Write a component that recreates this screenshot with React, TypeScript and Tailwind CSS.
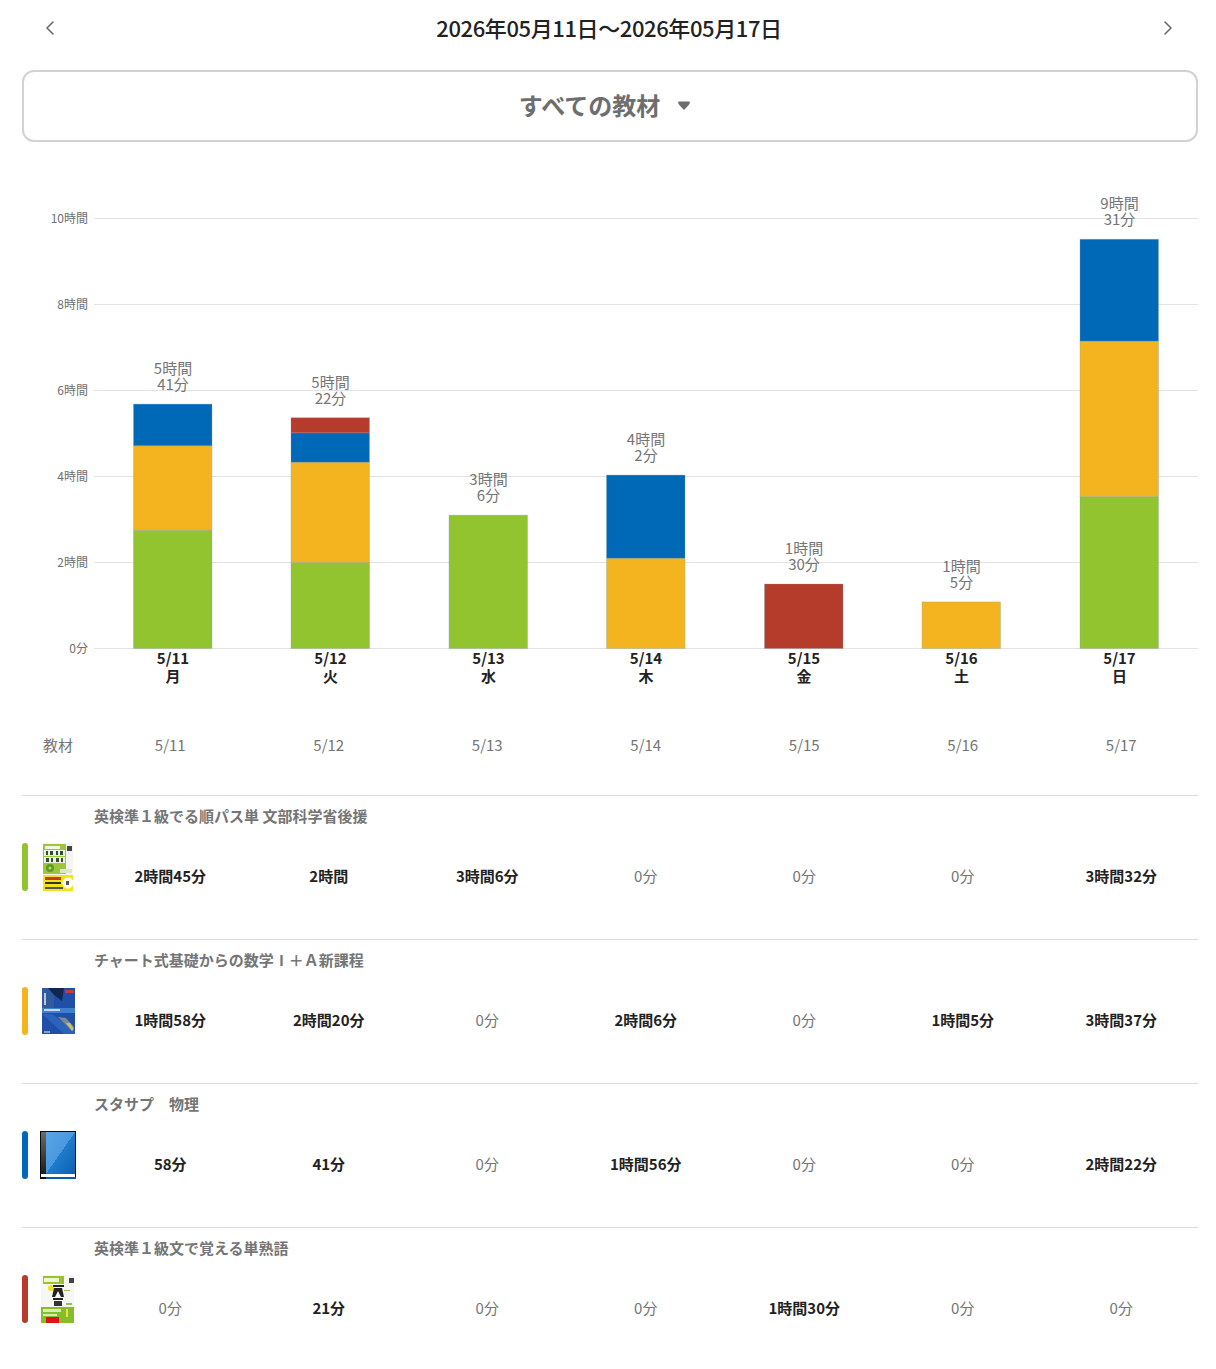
import { ChevronLeft, ChevronRight } from "lucide-react"
import type { ReactNode } from "react"

const GREEN = "#91c42e"
const ORANGE = "#f4b41f"
const BLUE = "#0069b7"
const RED = "#b53b2a"

const PX_PER_MIN = 43 / 60
const BASE_Y = 648

const days = [
  { date: "5/11", week: "月", cx: 173, total: ["5時間", "41分"], labelY: 373.5 },
  { date: "5/12", week: "火", cx: 330.5, total: ["5時間", "22分"], labelY: 387.5 },
  { date: "5/13", week: "水", cx: 488.5, total: ["3時間", "6分"], labelY: 484.5 },
  { date: "5/14", week: "木", cx: 646, total: ["4時間", "2分"], labelY: 444.5 },
  { date: "5/15", week: "金", cx: 804, total: ["1時間", "30分"], labelY: 553.5 },
  { date: "5/16", week: "土", cx: 961.5, total: ["1時間", "5分"], labelY: 571.5 },
  { date: "5/17", week: "日", cx: 1119.5, total: ["9時間", "31分"], labelY: 208.5 },
]

const books: { title: ReactNode; color: string; cover: string; mins: number[] }[] = [
  {
    title: "英検準１級でる順パス単 文部科学省後援",
    color: GREEN,
    cover: "pass",
    mins: [165, 120, 186, 0, 0, 0, 212],
  },
  {
    title: (
      <>
        チャート式基礎からの数学<span className="inline-block w-[15px] text-center">I</span>＋Ａ新課程
      </>
    ),
    color: ORANGE,
    cover: "chart",
    mins: [118, 140, 0, 126, 0, 65, 217],
  },
  {
    title: "スタサプ　物理",
    color: BLUE,
    cover: "plain",
    mins: [58, 41, 0, 116, 0, 0, 142],
  },
  {
    title: "英検準１級文で覚える単熟語",
    color: RED,
    cover: "tango",
    mins: [0, 21, 0, 0, 90, 0, 0],
  },
]

function formatMins(m: number) {
  if (m === 0) return "0分"
  const h = Math.floor(m / 60)
  const rest = m % 60
  if (h === 0) return `${rest}分`
  return rest === 0 ? `${h}時間` : `${h}時間${rest}分`
}

function Cover({ kind }: { kind: string }) {
  if (kind === "pass") {
    return (
      <svg width="36" height="48" viewBox="0 0 36 48">
        <rect x="3" y="0" width="30" height="48" fill="#f4f4f0" />
        <rect x="3" y="1" width="23" height="30" fill="#9cc63c" />
        <rect x="5" y="3" width="15" height="3" fill="#f6f6e0" />
        <rect x="4" y="7" width="21" height="6" fill="#eef2e6" />
        <rect x="4" y="14" width="21" height="6" fill="#eef2e6" />
        <rect x="6" y="8" width="2" height="4" fill="#33502a" />
        <rect x="10" y="8" width="3" height="4" fill="#33502a" />
        <rect x="16" y="8" width="2" height="4" fill="#33502a" />
        <rect x="20" y="8" width="3" height="4" fill="#33502a" />
        <rect x="6" y="15" width="3" height="4" fill="#33502a" />
        <rect x="11" y="15" width="2" height="4" fill="#33502a" />
        <rect x="16" y="15" width="3" height="4" fill="#33502a" />
        <rect x="21" y="15" width="2" height="4" fill="#33502a" />
        <circle cx="10" cy="25" r="4" fill="#5d9a24" />
        <circle cx="10" cy="25" r="1.5" fill="#b8d860" />
        <rect x="27" y="3" width="5" height="5" fill="#444" />
        <rect x="20" y="26" width="12" height="4" fill="#d8e8c8" />
        <rect x="3" y="32" width="30" height="16" fill="#f6e21a" />
        <rect x="5" y="34" width="16" height="3" fill="#c83a20" />
        <rect x="5" y="39" width="16" height="2" fill="#333" />
        <rect x="5" y="44" width="18" height="2" fill="#555" />
        <circle cx="28" cy="40" r="5.5" fill="#fdfdf0" />
        <rect x="26" y="38" width="3" height="4" fill="#555" />
      </svg>
    )
  }
  if (kind === "chart") {
    return (
      <svg width="36" height="48" viewBox="0 0 36 48">
        <rect x="2" y="1" width="33" height="46" fill="#1f4fa6" />
        <rect x="2" y="1" width="12" height="20" fill="#2f5a9c" />
        <polygon points="8,1 24,1 22,14 14,8" fill="#12274f" />
        <rect x="25" y="3" width="9" height="3" fill="#c83a3a" />
        <rect x="4" y="6" width="2" height="12" fill="#b9c6dc" />
        <rect x="2" y="21" width="33" height="5" fill="#3f7fd0" />
        <rect x="4" y="22" width="16" height="2" fill="#c8d8f0" />
        <polygon points="2,27 12,27 35,44 35,47 24,47" fill="#2a62bc" />
        <polygon points="18,30 26,31 34,40 32,44" fill="#7a8a90" />
        <polygon points="26,36 30,36 34,42 32,44" fill="#c8c070" />
        <rect x="4" y="44" width="6" height="2" fill="#8aa0c8" />
      </svg>
    )
  }
  if (kind === "tango") {
    return (
      <svg width="36" height="48" viewBox="0 0 36 48">
        <rect x="1" y="0" width="33" height="48" fill="#f6f6f2" />
        <rect x="3" y="1" width="21" height="8" fill="#94c52e" />
        <rect x="4" y="3" width="15" height="4" fill="#f4f4d0" />
        <rect x="29" y="3" width="5" height="5" fill="#444" />
        <circle cx="11" cy="13" r="3" fill="#f0e020" />
        <rect x="13" y="10" width="11" height="2" fill="#222" />
        <polygon points="14,13 22,13 24,22 21,22 18,16 15,22 12,22" fill="#222" />
        <rect x="13" y="23" width="10" height="2" fill="#222" />
        <rect x="14" y="26" width="8" height="5" fill="#333" />
        <rect x="24" y="15" width="6" height="1" fill="#9cc050" />
        <rect x="26" y="28" width="6" height="2" fill="#9cc050" />
        <rect x="1" y="32" width="33" height="16" fill="#85bd2b" />
        <rect x="3" y="34" width="18" height="3" fill="#dcebb0" />
        <rect x="3" y="39" width="14" height="2" fill="#dcebb0" />
        <rect x="26" y="34" width="2" height="8" fill="#f0e040" />
        <rect x="6" y="42" width="13" height="6" fill="#e01418" />
      </svg>
    )
  }
  return (
    <svg width="36" height="48" viewBox="0 0 36 48">
      <defs>
        <linearGradient id="plainBlue" x1="0" y1="0" x2="1" y2="1">
          <stop offset="0" stopColor="#5aa5e6" />
          <stop offset="0.5" stopColor="#4a98de" />
          <stop offset="0.5" stopColor="#1f7ccc" />
          <stop offset="1" stopColor="#0a62ae" />
        </linearGradient>
        <linearGradient id="plainSpine" x1="0" y1="0" x2="0" y2="1">
          <stop offset="0" stopColor="#6a6a6a" />
          <stop offset="1" stopColor="#1c1c1c" />
        </linearGradient>
      </defs>
      <rect x="0" y="0" width="36" height="48" fill="#0a0a0a" />
      <rect x="1" y="1" width="5" height="42" fill="url(#plainSpine)" />
      <rect x="6" y="1" width="29" height="42" fill="url(#plainBlue)" />
      <rect x="1" y="43" width="34" height="3" fill="#ffffff" />
      <rect x="6" y="46" width="30" height="2" fill="#0a5ca8" />
    </svg>
  )
}

function Chart() {
  const stacks = days.map((_, i) => books.map((b) => b.mins[i]))
  return (
    <svg width="1216" height="516" viewBox="0 190 1216 516" className="block">
      {[0, 2, 4, 6, 8, 10].map((h) => {
        const y = BASE_Y - h * 43
        return (
          <g key={h}>
            <line x1="94" x2="1198" y1={y + 0.5} y2={y + 0.5} stroke="#e2e2e2" />
            <text x="88" y={y + 4.5} textAnchor="end" fontSize="12" fill="#6f6f6f">
              {h === 0 ? "0分" : `${h}時間`}
            </text>
          </g>
        )
      })}
      {days.map((d, i) => {
        let top = BASE_Y
        return (
          <g key={d.date}>
            {stacks[i].map((m, j) => {
              if (m === 0) return null
              const h = m * PX_PER_MIN
              top -= h
              return (
                <rect
                  key={j}
                  x={d.cx - 39.5}
                  y={top + 0.5}
                  width="78.5"
                  height={h}
                  fill={books[j].color}
                  stroke="#7f9aa8"
                  strokeOpacity="0.3"
                  strokeWidth="1"
                />
              )
            })}
            <text x={d.cx} y={d.labelY} textAnchor="middle" fontSize="15" fill="#757575">
              {d.total[0]}
            </text>
            <text x={d.cx} y={d.labelY + 16} textAnchor="middle" fontSize="15" fill="#757575">
              {d.total[1]}
            </text>
            <text x={d.cx} y="663.5" textAnchor="middle" fontSize="15" fontWeight="700" fill="#222222">
              {d.date}
            </text>
            <text x={d.cx} y="681.5" textAnchor="middle" fontSize="15" fontWeight="700" fill="#222222">
              {d.week}
            </text>
          </g>
        )
      })}
    </svg>
  )
}

export default function App() {
  return (
    <div
      className="w-[1216px] h-[1369px] overflow-hidden bg-white"
      style={{ fontFamily: '"Noto Sans CJK JP", "Noto Sans", sans-serif' }}
    >
      <div className="flex items-center justify-between h-[58px] pl-[38px] pr-[36px]">
        <ChevronLeft className="w-6 h-6 text-[#666666] -mt-[3px]" strokeWidth={1.5} />
        <h1 className="text-[22px] font-medium text-[#222222] tracking-[-0.4px] mb-[4px]">
          2026年05月11日～2026年05月17日
        </h1>
        <ChevronRight className="w-6 h-6 text-[#666666] -mt-[3px]" strokeWidth={1.5} />
      </div>

      <div className="ml-[22px] mr-[18px] mt-[12px] h-[72px] border-2 border-[#d2d2d2] rounded-xl flex items-center justify-center gap-[17px] pr-[10px]">
        <span className="text-[24px] font-bold text-[#6e6e6e] mb-[2px]">すべての教材</span>
        <svg width="14" height="10" viewBox="0 0 14 10" className="mt-[-1px]">
          <path d="M1 1.5 Q1 0.5 2.5 0.5 H11.5 Q13 0.5 13 1.5 Q13 3 7 9 Q1 3 1 1.5 Z" fill="#6e6e6e" />
        </svg>
      </div>

      <div className="mt-[48px]">
        <Chart />
      </div>

      <div className="grid grid-cols-[69px_repeat(7,158.5px)] ml-[22px] h-[89px] text-[15px] text-[#757575]">
        <div className="pl-[21px] pt-[28px]">教材</div>
        {days.map((d) => (
          <div key={d.date} className="text-center pt-[28px]">
            {d.date}
          </div>
        ))}
      </div>

      {books.map((b) => (
        <div key={b.color} className="ml-[22px] mr-[18px] h-[144px] border-t border-[#dcdcdc]">
          <div className="pl-[72px] pt-[10px] text-[15px] leading-[20px] font-bold text-[#757575]">{b.title}</div>
          <div className="grid grid-cols-[69px_repeat(7,158.5px)] items-center mt-[17px] w-[1178px]">
            <div className="flex items-center gap-[12px]">
              <div className="w-[6px] h-[48px] rounded-full" style={{ backgroundColor: b.color }} />
              <Cover kind={b.cover} />
            </div>
            {b.mins.map((m, i) => (
              <div
                key={i}
                className={
                  m === 0
                    ? "text-center text-[15px] text-[#757575] pt-[18px]"
                    : "text-center text-[15px] font-bold text-[#222222] pt-[18px]"
                }
              >
                {formatMins(m)}
              </div>
            ))}
          </div>
        </div>
      ))}
    </div>
  )
}
